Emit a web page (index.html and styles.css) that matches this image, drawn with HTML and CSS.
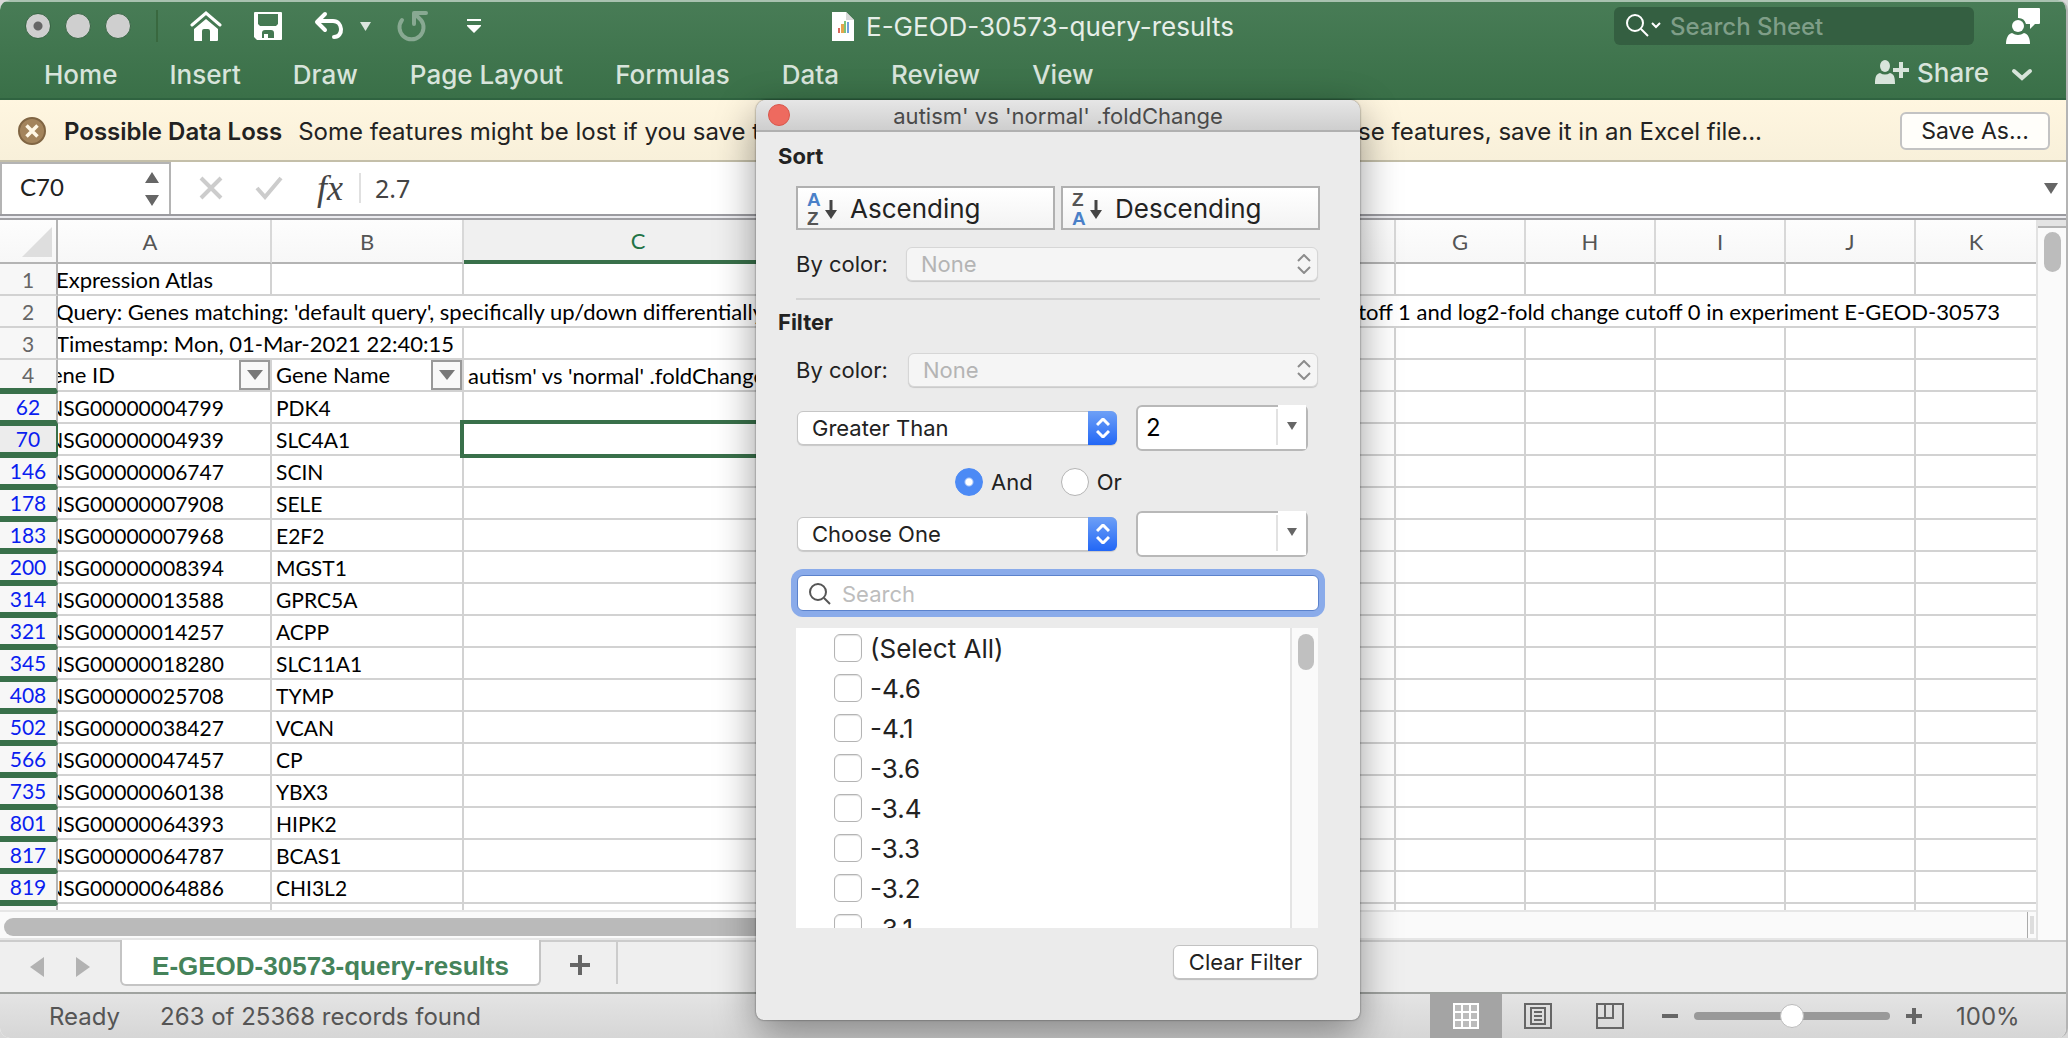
FILE: index.html
```html
<!DOCTYPE html>
<html lang="en">
<head>
<meta charset="utf-8">
<title>E-GEOD-30573-query-results</title>
<link rel="stylesheet" href="styles.css">
</head>
<body>
<div class="window">
  <header class="ribbon">
    <div class="titlebar">
      <div class="quick">
        <span class="light light-dirty"></span><span class="light"></span><span class="light"></span>
        <span class="quick-sep"></span>
        <button class="tool tool-home" aria-label="Home"><svg width="32" height="30" viewBox="0 0 32 30"><path d="M2 14 16 2l14 12" fill="none" stroke="#fff" stroke-width="3" stroke-linecap="round"/><path d="M4 18 16 8l12 10v11a1 1 0 0 1-1 1h-7v-10a2 2 0 0 0-2-2h-4a2 2 0 0 0-2 2v10H5a1 1 0 0 1-1-1z" fill="#fff"/></svg></button>
        <button class="tool tool-save" aria-label="Save"><svg width="28" height="28" viewBox="0 0 28 28"><path fill="#fff" fill-rule="evenodd" d="M1 0h26a1 1 0 0 1 1 1v26a1 1 0 0 1-1 1H3l-3-3V1a1 1 0 0 1 1-1zm3 2v10l2 2h16l2-2V2zm7 16a3 3 0 0 0-3 3v5h2v-4h4v4h6v-5a3 3 0 0 0-3-3z"/></svg></button>
        <button class="tool tool-undo" aria-label="Undo"><svg width="32" height="30" viewBox="0 0 32 30"><path d="M11 3 3 11l8 8M4 10h15c10 0 11 16 1 16" fill="none" stroke="#fff" stroke-width="4" stroke-linecap="round" stroke-linejoin="round"/></svg></button>
        <svg class="undo-more" width="11" height="9" viewBox="0 0 11 9"><path d="M0 0h11L5.500 9z" fill="#dbe6de"/></svg>
        <button class="tool tool-redo" aria-label="Redo"><svg width="32" height="32" viewBox="0 0 32 32"><path d="M5 10a12 12 0 1 0 19 0l-5-5" fill="none" stroke="#88a992" stroke-width="4" stroke-linecap="round"/><path d="M29 3H17v11" fill="none" stroke="#88a992" stroke-width="4" stroke-linecap="round" stroke-linejoin="round"/></svg></button>
        <button class="tool" aria-label="Customize toolbar"><svg width="14" height="14" viewBox="0 0 14 14"><path d="M0 0h14v2H0zM0 6h14v1L7 14 0 7z" fill="#fff"/></svg></button>
      </div>
      <h1 class="doc-title"><svg width="22" height="29" viewBox="0 0 22 29"><path d="M0 0h14l8 8v21H0z" fill="#fff"/><path d="M14 0v8h8z" fill="#d9d9d9"/><path d="M6 16h2v5H6z" fill="#d96a5d"/><path d="M9 12h3v9H9z" fill="#e6a54f"/><path d="M12 9h2v12h-2z" fill="#7cc47c"/><path d="M15 10h2v11h-2z" fill="#6fa0dd"/></svg>E-GEOD-30573-query-results</h1>
      <div class="title-right">
        <label class="sheet-search"><svg width="36" height="30" viewBox="0 0 36 30"><circle cx="9" cy="12" r="8" fill="none" stroke="#fff" stroke-width="2"/><path d="m15 18 7 7" stroke="#fff" stroke-width="2"/><path d="m26 12 4 4 4-4" fill="none" stroke="#fff" stroke-width="2"/></svg><input type="text" placeholder="Search Sheet" aria-label="Search Sheet"></label>
        <button class="tool" aria-label="Account"><svg width="34" height="36" viewBox="0 0 34 36"><path d="M13 0h20a1 1 0 0 1 1 1v14a1 1 0 0 1-1 1h-4l-5 5v-5h-4a8 8 0 0 0-8-6V1a1 1 0 0 1 1-1z" fill="#fff"/><circle cx="12" cy="18" r="6" fill="#fff"/><path d="M0 36c0-6 2-10 6-11q6 4 12 0c4 1 6 5 6 11z" fill="#fff"/></svg></button>
      </div>
    </div>
    <nav class="tabs">
      <a href="#">Home</a><a href="#">Insert</a><a href="#">Draw</a><a href="#">Page Layout</a><a href="#">Formulas</a><a href="#">Data</a><a href="#">Review</a><a href="#">View</a>
      <button class="share"><svg width="34" height="26" viewBox="0 0 34 26"><ellipse cx="10" cy="7" rx="5" ry="6" fill="#d8e4db"/><path d="M0 25c0-7 1-10 5-11q5 3 10 0c4 1 5 4 5 11zM24 3h4v6h6v4h-6v6h-4v-6h-6V9h6z" fill="#d8e4db"/></svg>Share</button>
      <button class="tool collapse" aria-label="Collapse ribbon"><svg width="22" height="14" viewBox="0 0 22 14"><path d="m3 4 8 7 8-7" fill="none" stroke="#d8e4db" stroke-width="4" stroke-linecap="round"/></svg></button>
    </nav>
  </header>

  <div class="notice">
    <button class="tool" aria-label="Dismiss"><svg width="28" height="28" viewBox="0 0 28 28"><circle cx="14" cy="14" r="13" fill="#a3845c" stroke="#806543" stroke-width="2"/><path d="m8.500 8.500 11 11m0-11-11 11" stroke="#fff8e6" stroke-width="3.500"/></svg></button>
    <strong>Possible Data Loss</strong>
    <p class="notice-text"><span>Some features might be lost if you save this</span><span>To preserve these features, save it in an Excel file...</span></p>
    <button class="save-as">Save As...</button>
  </div>

  <div class="formula">
    <div class="namebox"><input type="text" value="C70" aria-label="Name box"><svg width="14" height="34" viewBox="0 0 14 34"><path d="M7 0l7 11H0zM7 34l7-11H0z" fill="#666"/></svg></div>
    <button class="tool" aria-label="Cancel"><svg width="24" height="24" viewBox="0 0 24 24"><path d="m2 2 20 20m0-20L2 22" stroke="#ccc" stroke-width="4"/></svg></button>
    <button class="tool" aria-label="Enter"><svg width="28" height="24" viewBox="0 0 28 24"><path d="m2 12 8 9L26 2" fill="none" stroke="#ccc" stroke-width="4"/></svg></button>
    <button class="tool fx" aria-label="Insert function">fx</button>
    <input class="formula-text" type="text" value="2.7" aria-label="Formula">
    <svg width="14" height="11" viewBox="0 0 14 11"><path d="M0 0h14L7 11z" fill="#666"/></svg>
  </div>

  <main class="sheet">
    <div class="grid">
      <table>
        <colgroup><col class="w-row"><col class="w-a"><col class="w-b"><col class="w-c"><col class="w-d"><col class="w-n"><col class="w-n"><col class="w-n"><col class="w-n"><col class="w-n"><col class="w-n"><col></colgroup>
        <thead><tr><th class="corner"><svg width="30" height="30" viewBox="0 0 30 30"><path d="M30 0v30H0z" fill="#dedede"/></svg></th><th class="first">A</th><th>B</th><th class="active">C</th><th>D</th><th>E</th><th>F</th><th>G</th><th>H</th><th>I</th><th>J</th><th>K</th></tr></thead>
        <tbody>
          <tr class="note"><th>1</th><td class="over">Expression Atlas</td><td></td><td></td><td></td><td></td><td></td><td></td><td></td><td></td><td></td><td></td></tr>
          <tr class="note"><th>2</th><td class="over" colspan="11"><div class="long"><span>Query: Genes matching: 'default query', specifically up/down differentially expressed</span><span>given the p-value cutoff 1 and log2-fold change cutoff 0 in experiment E-GEOD-30573</span></div></td></tr>
          <tr class="note"><th>3</th><td class="over" colspan="2">Timestamp: Mon, 01-Mar-2021 22:40:15</td><td></td><td></td><td></td><td></td><td></td><td></td><td></td><td></td><td></td></tr>
          <tr class="note heads"><th>4</th><td class="id"><div class="head">Gene ID<button aria-label="Filter Gene ID"><svg width="16" height="10" viewBox="0 0 16 10"><path d="M0 0h16L8 10z" fill="#777"/></svg></button></div></td><td><div class="head">Gene Name<button aria-label="Filter Gene Name"><svg width="16" height="10" viewBox="0 0 16 10"><path d="M0 0h16L8 10z" fill="#777"/></svg></button></div></td><td>autism' vs 'normal' .foldChange</td><td></td><td></td><td></td><td></td><td></td><td></td><td></td><td></td></tr>
          <tr class="hit"><th>62</th><td class="id">ENSG00000004799</td><td>PDK4</td><td></td><td></td><td></td><td></td><td></td><td></td><td></td><td></td><td></td></tr>
          <tr class="hit current"><th>70</th><td class="id">ENSG00000004939</td><td>SLC4A1</td><td class="selected"></td><td></td><td></td><td></td><td></td><td></td><td></td><td></td><td></td></tr>
          <tr class="hit"><th>146</th><td class="id">ENSG00000006747</td><td>SCIN</td><td></td><td></td><td></td><td></td><td></td><td></td><td></td><td></td><td></td></tr>
          <tr class="hit"><th>178</th><td class="id">ENSG00000007908</td><td>SELE</td><td></td><td></td><td></td><td></td><td></td><td></td><td></td><td></td><td></td></tr>
          <tr class="hit"><th>183</th><td class="id">ENSG00000007968</td><td>E2F2</td><td></td><td></td><td></td><td></td><td></td><td></td><td></td><td></td><td></td></tr>
          <tr class="hit"><th>200</th><td class="id">ENSG00000008394</td><td>MGST1</td><td></td><td></td><td></td><td></td><td></td><td></td><td></td><td></td><td></td></tr>
          <tr class="hit"><th>314</th><td class="id">ENSG00000013588</td><td>GPRC5A</td><td></td><td></td><td></td><td></td><td></td><td></td><td></td><td></td><td></td></tr>
          <tr class="hit"><th>321</th><td class="id">ENSG00000014257</td><td>ACPP</td><td></td><td></td><td></td><td></td><td></td><td></td><td></td><td></td><td></td></tr>
          <tr class="hit"><th>345</th><td class="id">ENSG00000018280</td><td>SLC11A1</td><td></td><td></td><td></td><td></td><td></td><td></td><td></td><td></td><td></td></tr>
          <tr class="hit"><th>408</th><td class="id">ENSG00000025708</td><td>TYMP</td><td></td><td></td><td></td><td></td><td></td><td></td><td></td><td></td><td></td></tr>
          <tr class="hit"><th>502</th><td class="id">ENSG00000038427</td><td>VCAN</td><td></td><td></td><td></td><td></td><td></td><td></td><td></td><td></td><td></td></tr>
          <tr class="hit"><th>566</th><td class="id">ENSG00000047457</td><td>CP</td><td></td><td></td><td></td><td></td><td></td><td></td><td></td><td></td><td></td></tr>
          <tr class="hit"><th>735</th><td class="id">ENSG00000060138</td><td>YBX3</td><td></td><td></td><td></td><td></td><td></td><td></td><td></td><td></td><td></td></tr>
          <tr class="hit"><th>801</th><td class="id">ENSG00000064393</td><td>HIPK2</td><td></td><td></td><td></td><td></td><td></td><td></td><td></td><td></td><td></td></tr>
          <tr class="hit"><th>817</th><td class="id">ENSG00000064787</td><td>BCAS1</td><td></td><td></td><td></td><td></td><td></td><td></td><td></td><td></td><td></td></tr>
          <tr class="hit"><th>819</th><td class="id">ENSG00000064886</td><td>CHI3L2</td><td></td><td></td><td></td><td></td><td></td><td></td><td></td><td></td><td></td></tr>
          <tr class="hit"><th></th><td></td><td></td><td></td><td></td><td></td><td></td><td></td><td></td><td></td><td></td><td></td></tr>
        </tbody>
      </table>
    </div>
    <div class="vscroll"><div class="vsplit"></div><div class="vthumb"></div></div>
    <div class="hscroll"><div class="htrack"><div class="hthumb"></div></div><div class="hsplit"></div></div>
  </main>

  <div class="sheet-tabs">
    <button class="tool step" aria-label="Previous sheet"><svg width="14" height="20" viewBox="0 0 14 20"><path d="M14 0v20L0 10z" fill="#b2b2b2"/></svg></button>
    <button class="tool step" aria-label="Next sheet"><svg width="14" height="20" viewBox="0 0 14 20"><path d="M0 0v20l14-10z" fill="#b2b2b2"/></svg></button>
    <a class="sheet-tab" href="#">E-GEOD-30573-query-results</a>
    <button class="tool add" aria-label="Add sheet"><svg width="20" height="20" viewBox="0 0 20 20"><path d="M8 0h4v8h8v4h-8v8H8v-8H0V8h8z" fill="#666"/></svg></button>
  </div>

  <footer class="status">
    <span>Ready</span><span class="records">263 of 25368 records found</span>
    <button class="view view-on" aria-label="Normal view"><svg width="26" height="26" viewBox="0 0 26 26"><path d="M1 1h24v24H1zM9 1v24M17 1v24M1 9h24M1 17h24" fill="#bbb" stroke="#fff" stroke-width="2"/></svg></button>
    <button class="view" aria-label="Page layout view"><svg width="28" height="26" viewBox="0 0 28 26"><path d="M1 1h26v24H1zM7 5h14v16H7zM10 9h8M10 13h8M10 17h8" fill="none" stroke="#666" stroke-width="2"/></svg></button>
    <button class="view" aria-label="Page break view"><svg width="28" height="26" viewBox="0 0 28 26"><path d="M1 1h26v24H1zM1 15h16V1M9 1v14" fill="none" stroke="#666" stroke-width="2"/></svg></button>
    <button class="tool zoom-out" aria-label="Zoom out"><svg width="16" height="4" viewBox="0 0 16 4"><path d="M0 0h16v4H0z" fill="#666"/></svg></button>
    <input class="zoom" type="range" min="0" max="100" value="50" aria-label="Zoom">
    <button class="tool" aria-label="Zoom in"><svg width="16" height="16" viewBox="0 0 16 16"><path d="M6 0h4v6h6v4h-6v6H6v-6H0V6h6z" fill="#666"/></svg></button>
    <span class="percent">100%</span>
  </footer>
</div>

<section class="dialog" role="dialog" aria-labelledby="dialog-title">
  <div class="dialog-bar"><button class="close" aria-label="Close"></button><h2 id="dialog-title">autism' vs 'normal' .foldChange</h2></div>
  <div class="dialog-body">
    <h3>Sort</h3>
    <div class="sort-row">
      <button class="sort"><svg width="32" height="34" viewBox="0 0 32 34"><path d="M24 8v13" stroke="#444" stroke-width="3"/><path d="M18 18h12l-6 9z" fill="#444"/><text x="0" y="14" class="glyph blue">A</text><text x="0" y="33" class="glyph">Z</text></svg>Ascending</button>
      <button class="sort"><svg width="32" height="34" viewBox="0 0 32 34"><path d="M24 8v13" stroke="#444" stroke-width="3"/><path d="M18 18h12l-6 9z" fill="#444"/><text x="0" y="14" class="glyph">Z</text><text x="0" y="33" class="glyph blue">A</text></svg>Descending</button>
    </div>
    <div class="color-row"><label for="sort-color">By color:</label><div class="pick pick-off"><select id="sort-color" disabled><option>None</option></select><svg class="arrows" width="14" height="20" viewBox="0 0 14 20"><path d="m1 7 6-6 6 6M1 13l6 6 6-6"/></svg></div></div>
    <hr>
    <h3>Filter</h3>
    <div class="color-row color-row-filter"><label for="filter-color">By color:</label><div class="pick pick-off"><select id="filter-color" disabled><option>None</option></select><svg class="arrows" width="14" height="20" viewBox="0 0 14 20"><path d="m1 7 6-6 6 6M1 13l6 6 6-6"/></svg></div></div>
    <div class="rule-row">
      <div class="pick pick-on"><select aria-label="First condition"><option>Greater Than</option></select><span class="cap"><svg class="arrows" width="14" height="20" viewBox="0 0 14 20"><path d="m1 7 6-6 6 6M1 13l6 6 6-6"/></svg></span></div>
      <div class="combo"><input type="text" value="2" aria-label="First value"><button aria-label="Show values"><svg width="10" height="8" viewBox="0 0 10 8"><path d="M0 0h10L5 8z" fill="#666"/></svg></button></div>
    </div>
    <div class="logic"><label><input type="radio" name="logic" checked>And</label><label><input type="radio" name="logic">Or</label></div>
    <div class="rule-row">
      <div class="pick pick-on"><select aria-label="Second condition"><option>Choose One</option></select><span class="cap"><svg class="arrows" width="14" height="20" viewBox="0 0 14 20"><path d="m1 7 6-6 6 6M1 13l6 6 6-6"/></svg></span></div>
      <div class="combo"><input type="text" value="" aria-label="Second value"><button aria-label="Show values"><svg width="10" height="8" viewBox="0 0 10 8"><path d="M0 0h10L5 8z" fill="#666"/></svg></button></div>
    </div>
    <label class="search"><svg width="22" height="22" viewBox="0 0 22 22"><circle cx="9" cy="9" r="8" fill="none" stroke="#555" stroke-width="2"/><path d="m15 15 6 6" stroke="#555" stroke-width="2"/></svg><input type="text" placeholder="Search" aria-label="Search"></label>
    <div class="list">
      <div class="items">
        <label><input type="checkbox">(Select All)</label>
        <label><input type="checkbox">-4.6</label>
        <label><input type="checkbox">-4.1</label>
        <label><input type="checkbox">-3.6</label>
        <label><input type="checkbox">-3.4</label>
        <label><input type="checkbox">-3.3</label>
        <label><input type="checkbox">-3.2</label>
        <label><input type="checkbox">-3.1</label>
      </div>
      <div class="list-scroll"><div class="list-thumb"></div></div>
    </div>
    <button class="clear">Clear Filter</button>
  </div>
</section>
</body>
</html>
```
FILE: styles.css
```css
* { box-sizing: border-box; }
body { margin: 0; background: #d8d8d8; font-family: Inter, "Liberation Sans", sans-serif; color: #222; }
button, input, select { font: inherit; color: inherit; }
svg { display: block; flex: none; }
h1, h2, h3, p { margin: 0; }
a { color: inherit; text-decoration: none; }
.tool { display: flex; padding: 0; border: 0; background: none; }

.window { display: flex; flex-direction: column; height: 100vh; overflow: hidden; border-right: 2px solid #b4b4b4; border-radius: 10px; background: #fff; }

/* ribbon */
.ribbon { flex: none; height: 100px; border-top: 2px solid #a9c2b0; border-bottom: 2px solid #2f6340; background: linear-gradient(#487c56, #3a7048); color: #d8e4db; font-size: 26px; }
.titlebar { display: grid; grid-template-columns: 1fr auto 1fr; align-items: center; height: 48px; }
.quick { display: flex; align-items: center; padding-left: 25px; }
.light { width: 26px; height: 26px; margin-right: 14px; border: 1px solid #386544; border-radius: 50%; background: #cfcfcf; }
.light-dirty { background: radial-gradient(circle, #666 4px, #cfcfcf 5px); }
.quick-sep { width: 2px; height: 32px; margin: 0 32px 0 11px; background: #39683f; }
.tool-home, .tool-save { margin-right: 32px; }
.undo-more { margin: 0 26px 0 14px; }
.tool-redo { margin-right: 38px; }
.doc-title { display: flex; align-items: center; gap: 12px; font-size: 26px; font-weight: 400; color: #e6eee8; }
.title-right { display: flex; justify-content: flex-end; align-items: center; gap: 32px; padding-right: 26px; }
.sheet-search { display: flex; align-items: center; gap: 8px; width: 360px; height: 38px; padding-left: 12px; border-radius: 6px; background: #345f41; font-size: 24px; font-weight: 500; }
.sheet-search input { min-width: 0; flex: 1; padding: 0; border: 0; background: none; }
.sheet-search input::placeholder { color: #7f9e88; opacity: 1; }
.tabs { display: flex; align-items: center; gap: 52px; height: 48px; padding: 0 33px 0 44px; font-weight: 500; }
.share { display: flex; align-items: center; gap: 8px; height: 44px; margin-left: auto; padding: 0 0 4px; border: 0; background: none; font-weight: 500; }
.collapse { margin-left: -30px; }

/* compatibility notice */
.notice { flex: none; display: flex; align-items: center; height: 62px; padding: 2px 16px 0 18px; border-bottom: 2px solid #c4bfa9; background: linear-gradient(#fff6e0, #f8f0da); font-size: 24px; white-space: nowrap; }
.notice strong { margin: 0 16px 0 18px; font-weight: 600; }
.notice-text { display: flex; justify-content: space-between; flex: 1; min-width: 0; margin-right: 138px; }
.save-as { width: 150px; height: 38px; padding: 0; border: 2px solid #c3c3c3; border-radius: 6px; background: #fffefa; font-size: 23px; }

/* formula bar */
.formula { flex: none; display: flex; align-items: center; gap: 32px; height: 58px; padding: 0 8px 4px 0; border-bottom: 2px solid #a0a0a4; background: linear-gradient(#fff 52px, #9b9ba0 52px, #9b9ba0 54px, #ececf0 54px); }
.namebox { display: flex; align-items: center; width: 171px; height: 52px; margin-right: -4px; padding: 0 10px 0 18px; border: 2px solid #b4b4b4; border-bottom: 0; }
.namebox input { min-width: 0; flex: 1; padding: 0 0 4px; border: 0; background: none; font: 24px/28px Lato, sans-serif; }
.fx { margin-left: 2px; font: italic 36px/36px "Liberation Serif", serif; color: #444; }
.formula-text { flex: 1; height: 30px; margin-left: -16px; padding: 0 0 0 14px; border: 0; border-left: 2px solid #e0e0e0; background: none; font: 25px/28px "Noto Sans", sans-serif; color: #444; }

/* grid */
.sheet { flex: 1; min-height: 0; display: grid; grid-template: 1fr 30px / 1fr 30px; }
.grid { overflow: hidden; }
table { width: 100%; table-layout: fixed; border-collapse: separate; border-spacing: 0; font-family: Lato, "Liberation Sans", sans-serif; font-size: 21px; line-height: 28px; color: #000; }
.w-row { width: 58px; } .w-a { width: 214px; } .w-b { width: 192px; } .w-c { width: 350px; } .w-d { width: 322px; } .w-n { width: 130px; }
th, td { height: 32px; padding: 2px 0 0; border-right: 2px solid #d2d2d2; border-bottom: 2px solid #d2d2d2; }
thead th { height: 44px; border-color: #d8d8d8; border-bottom-color: #b4b4b4; background: linear-gradient(#fdfdfd, #f7f7f7); font-size: 22px; font-weight: 400; color: #555; }
thead .corner { padding-left: 22px; border-right-color: #b4b4b4; }
thead .first { padding-right: 28px; }
thead .active { border-bottom: 4px solid #39704a; background: #f0f0f0; color: #217346; }
td { overflow: hidden; padding-left: 4px; white-space: nowrap; }
th:last-child, td:last-child { border-right: 0; }
tbody th { border-right-color: #b4b4b4; background: #f7f7f7; font-size: 21px; line-height: 26px; font-weight: 400; color: #666; }
.note { font-size: 22px; }
.over { padding-left: 0; text-indent: -2px; }
.id { padding-left: 0; text-indent: -23px; }
.long { display: flex; justify-content: space-between; padding-right: 36px; }
.heads th { border-bottom: 4px solid #39704a; }
.hit th { padding: 0; border-top: 2px solid #39704a; border-bottom: 4px solid #39704a; color: #0a1ef0; }
.current th { border-right-color: #39704a; background: #ececec; }
.heads td:nth-child(2), .heads td:nth-child(3) { padding-top: 0; }
.head { display: flex; justify-content: space-between; align-items: center; height: 30px; }
.head button { display: flex; align-items: center; justify-content: center; width: 31px; height: 30px; padding: 0; border: 2px solid #999; background: #f8f8f8; }
.selected { position: relative; overflow: visible; }
.selected::after { content: ""; position: absolute; inset: -4px -2px -4px -4px; border: 4px solid #39704a; }
.vscroll { grid-row: 1 / 3; grid-column: 2; border-left: 2px solid #e2e2e2; background: #fafafa; }
.vsplit { height: 8px; border-bottom: 2px solid #b4b4b4; background: #e4e4e4; }
.vthumb { width: 17px; height: 40px; margin: 4px 0 0 6px; border-radius: 9px; background: #bcbcbc; }
.hscroll { display: flex; border-top: 2px solid #e6e6e6; border-bottom: 2px solid #e6e6e6; background: #fafafa; }
.htrack { flex: 1; padding: 6px 0 0 4px; border-right: 1px solid #aaa; }
.hthumb { width: 60%; height: 18px; border-radius: 9px; background: #bababa; }
.hsplit { width: 4px; height: 18px; margin: 4px 2px; background: #ddd; }

/* sheet tabs */
.sheet-tabs { flex: none; display: flex; align-items: center; height: 52px; padding-left: 30px; border-top: 2px solid #ccc; background: #efefef; }
.step { margin-right: 32px; }
.sheet-tab { align-self: flex-start; width: 421px; height: 46px; margin: -2px 0 0 -2px; border: 2px solid #c4c4c4; border-top: 0; border-radius: 0 0 6px 6px; background: #fff; font: bold 26px/52px "Liberation Sans", sans-serif; text-align: center; color: #45835a; }
.add { align-self: flex-start; height: 42px; padding: 13px 26px 0 29px; border-right: 2px solid #ccc; }

/* status bar */
.status { flex: none; display: flex; align-items: center; height: 46px; padding-left: 49px; border-top: 2px solid #a0a3a0; background: linear-gradient(#e4e4e4, #d6d6d6); font-size: 24px; color: #555; }
.records { margin: 0 auto 0 40px; }
.view { display: flex; align-items: center; justify-content: center; width: 72px; height: 44px; padding: 0; border: 0; background: none; }
.view-on { background: #a4a4a4; }
.zoom-out { margin: 0 16px; }
.zoom { appearance: none; width: 196px; height: 8px; margin: 0 16px 0 0; border-radius: 4px; background: #999; }
.zoom::-webkit-slider-thumb { appearance: none; width: 24px; height: 24px; border: 1px solid #bbb; border-radius: 50%; background: #fff; }
.percent { width: 144px; padding-left: 34px; }

/* filter dialog, floating over the sheet */
.dialog { position: absolute; top: 100px; left: 756px; width: 604px; height: 920px; border-radius: 10px 10px 8px 8px; background: #ebebeb; box-shadow: 0 0 2px rgba(0,0,0,.6), 0 14px 40px rgba(0,0,0,.4); font-size: 22px; overflow: hidden; }
.dialog-bar { display: grid; grid-template-columns: 22px 1fr 22px; align-items: center; height: 32px; padding: 0 12px; border-bottom: 2px solid #b0b0b0; background: linear-gradient(#e6e6e6, #cecece); }
.dialog-bar h2 { padding-top: 2px; font-size: 22px; line-height: 28px; font-weight: 400; text-align: center; color: #4a4a4a; }
.close { width: 22px; height: 22px; padding: 0; border: 1px solid #d8574c; border-radius: 50%; background: #ee6a5f; }
.dialog-body { display: flex; flex-direction: column; padding: 10px 40px 0; }
.dialog h3 { margin-left: -18px; font-size: 22px; line-height: 28px; font-weight: 700; }
.sort-row { display: grid; grid-template-columns: 1fr 1fr; gap: 6px; margin-top: 16px; }
.sort { display: flex; align-items: center; gap: 11px; height: 44px; padding: 2px 9px 0; border: 2px solid #b0b0b0; background: linear-gradient(#fff, #f3f3f3); font-size: 26px; line-height: 32px; }
.glyph { font: bold 19px "Liberation Sans", sans-serif; fill: #555; }
.blue { fill: #4a80c8; }
.color-row { display: flex; align-items: center; gap: 16px; margin: 17px 2px 0 0; }
.color-row label { width: 94px; white-space: nowrap; }
.color-row-filter label { width: 96px; }
.pick { position: relative; flex: 1; display: flex; align-items: center; height: 34px; }
.pick select { appearance: none; width: 100%; height: 34px; padding: 0 14px; border: 1px solid #c6c6c6; border-radius: 6px; background: #fff; box-shadow: 0 1px 1px rgba(0,0,0,.15); }
.pick-off select { border-color: #d6d6d6; background: #f5f5f5; color: #b4b4b4; opacity: 1; }
.arrows { fill: none; stroke: #8c8c8c; stroke-width: 2; }
.pick-off .arrows { position: absolute; right: 7px; }
.cap { position: absolute; right: 0; display: flex; align-items: center; justify-content: center; width: 29px; height: 34px; border-radius: 0 6px 6px 0; background: linear-gradient(#6ea0f6, #2267f6); }
.cap .arrows { stroke: #fff; stroke-width: 3; }
hr { width: 100%; height: 2px; margin: 17px 0 8px; border: 0; background: #d4d4d4; }
.rule-row { display: flex; align-items: center; gap: 19px; padding: 0 12px 0 1px; }
.color-row + .rule-row { margin-top: 18px; }
.combo { display: flex; width: 172px; height: 46px; border: 2px solid #b8b8b8; border-radius: 6px; background: #fff; }
.combo input { min-width: 0; flex: 1; margin: 2px 0 4px; padding: 0 8px; border: 0; border-right: 2px solid #e2e2e2; background: none; color: #000; font-size: 24px; }
.combo button { display: flex; align-items: center; justify-content: center; width: 28px; margin-top: -2px; padding: 0 0 2px; border: 0; background: #fff; }
.logic { display: flex; gap: 28px; margin: 17px 0 15px 159px; }
.logic label { display: flex; align-items: center; gap: 8px; height: 28px; }
.logic input { appearance: none; width: 28px; height: 28px; margin: 0; border: 1px solid #b4b4b4; border-radius: 50%; background: #fff; }
.logic input:checked { border-color: #4c8af5; background: radial-gradient(circle, #fff 3px, #4c8af5 5px); }
.search { display: flex; align-items: center; gap: 11px; height: 36px; margin: 18px 1px 0; padding: 1px 0 0 11px; border: 1px solid #5b82cc; border-radius: 6px; background: #fff; box-shadow: 0 0 0 6px #8aabea; }
.search input { flex: 1; padding: 0; border: 0; outline: 0; background: none; }
.search input::placeholder { color: #bdbdbd; opacity: 1; }
.list { display: flex; height: 300px; margin: 17px 2px 0 0; overflow: hidden; background: #fff; font-size: 26px; }
.items { flex: 1; padding: 0 38px; }
.items label { display: flex; align-items: center; gap: 8px; height: 40px; }
.items input { appearance: none; flex: none; width: 28px; height: 28px; margin: 0; border: 1px solid #b4b4b4; border-radius: 6px; background: #fff; box-shadow: inset 0 1px 1px rgba(0,0,0,.12); }
.list-scroll { width: 28px; padding: 6px 0 0 6px; border-left: 2px solid #e4e4e4; background: #fafafa; }
.list-thumb { width: 16px; height: 36px; border-radius: 8px; background: #c0c0c0; }
.clear { align-self: flex-end; width: 145px; height: 34px; margin: 17px 2px 0 0; padding: 0; border: 1px solid #c2c2c2; border-radius: 6px; background: #fff; box-shadow: 0 1px 1px rgba(0,0,0,.2); white-space: nowrap; }
```
